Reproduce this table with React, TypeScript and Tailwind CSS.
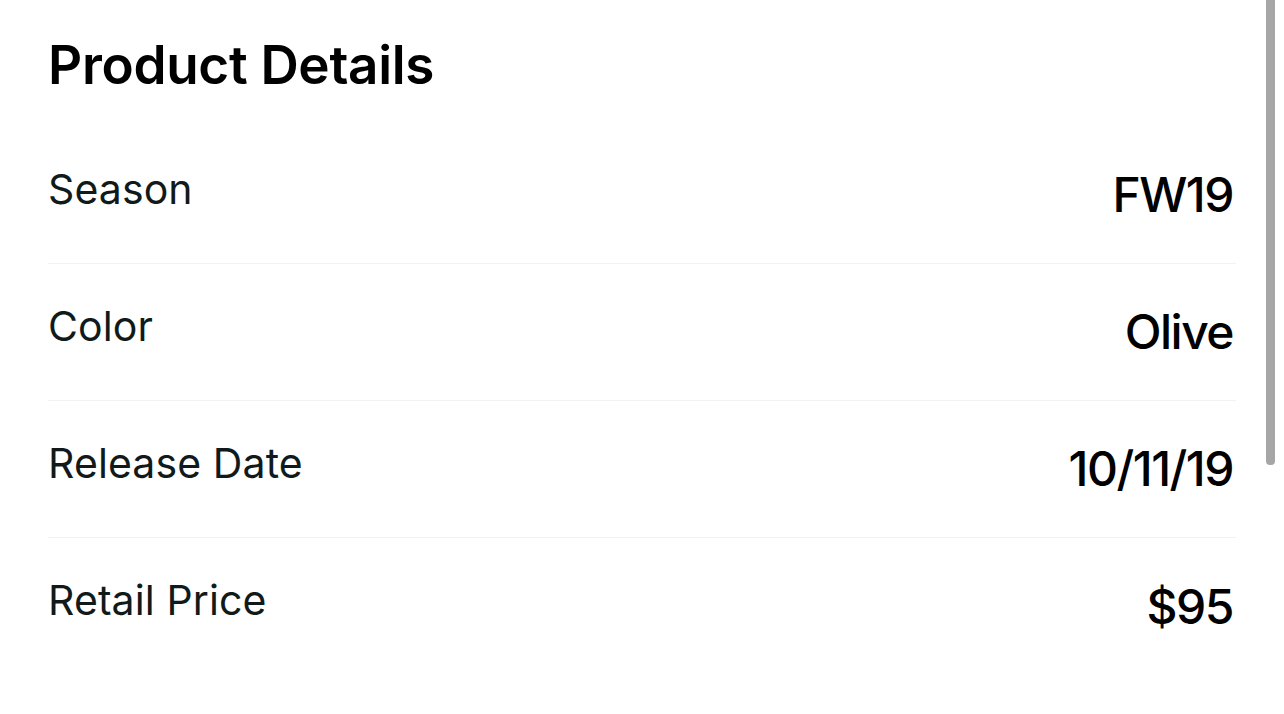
import React from 'react';

const details = [
  { label: 'Season', value: 'FW19' },
  { label: 'Color', value: 'Olive' },
  { label: 'Release Date', value: '10/11/19' },
  { label: 'Retail Price', value: '$95' },
];

const App: React.FC = () => {
  return (
    <div className="relative h-[714px] w-[1284px] overflow-hidden bg-white font-['Inter',sans-serif]">
      <div className="px-12 pt-[39px]">
        <h1 className="text-[53px] font-semibold leading-none tracking-[-0.3px] text-black">Product Details</h1>
        <div className="mt-[35px]">
          {details.map((d, i) => (
            <div
              key={d.label}
              className={`flex h-[137px] items-center justify-between ${i < details.length - 1 ? 'border-b border-[#f2f2f2]' : ''}`}
            >
              <span className="pb-3 text-[41px] leading-none tracking-[0.1px] text-[#111a1a]">{d.label}</span>
              <span className="pr-[3px] text-[48px] font-medium leading-none tracking-[-1.5px] text-black">{d.value}</span>
            </div>
          ))}
        </div>
      </div>
      <div className="absolute right-[9px] top-0 h-[465px] w-[9px] rounded-b-sm bg-[#a6a6a6]" />
    </div>
  );
};

export default App;
